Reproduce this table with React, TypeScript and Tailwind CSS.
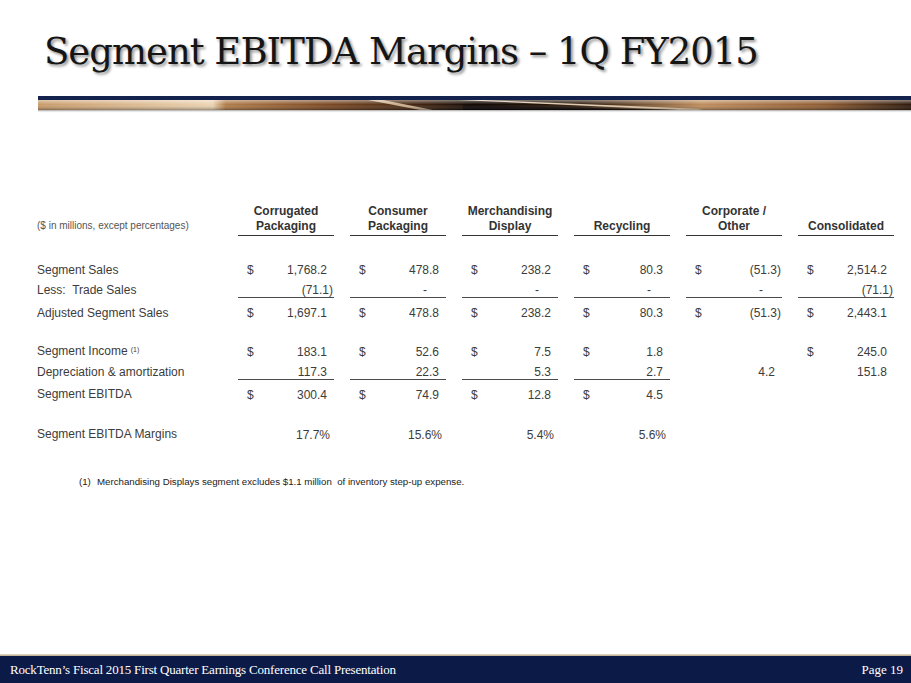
type Kind = "n" | "p" | "d" | "pct";

type Cell = {
  dollar?: boolean;
  value?: string;
  kind?: Kind;
  line?: boolean;
};

type Row = {
  label: string;
  note?: boolean;
  underline?: boolean;
  cells: Cell[];
  gap?: string;
};

const padFor: Record<Kind, string> = {
  n: "pr-[7px]",
  p: "pr-[1px]",
  d: "pr-[19px]",
  pct: "pr-[4px]",
};

const headers: string[][] = [
  ["Corrugated", "Packaging"],
  ["Consumer", "Packaging"],
  ["Merchandising", "Display"],
  ["Recycling"],
  ["Corporate /", "Other"],
  ["Consolidated"],
];

const rows: Row[] = [
  {
    label: "Segment Sales",
    gap: "mt-[23.5px]",
    cells: [
      { dollar: true, value: "1,768.2", kind: "n" },
      { dollar: true, value: "478.8", kind: "n" },
      { dollar: true, value: "238.2", kind: "n" },
      { dollar: true, value: "80.3", kind: "n" },
      { dollar: true, value: "(51.3)", kind: "p" },
      { dollar: true, value: "2,514.2", kind: "n" },
    ],
  },
  {
    label: "Less:  Trade Sales",
    underline: true,
    cells: [
      { value: "(71.1)", kind: "p", line: true },
      { value: "-", kind: "d", line: true },
      { value: "-", kind: "d", line: true },
      { value: "-", kind: "d", line: true },
      { value: "-", kind: "d", line: true },
      { value: "(71.1)", kind: "p", line: true },
    ],
  },
  {
    label: "Adjusted Segment Sales",
    cells: [
      { dollar: true, value: "1,697.1", kind: "n" },
      { dollar: true, value: "478.8", kind: "n" },
      { dollar: true, value: "238.2", kind: "n" },
      { dollar: true, value: "80.3", kind: "n" },
      { dollar: true, value: "(51.3)", kind: "p" },
      { dollar: true, value: "2,443.1", kind: "n" },
    ],
  },
  {
    label: "Segment Income",
    note: true,
    gap: "mt-[17px]",
    cells: [
      { dollar: true, value: "183.1", kind: "n" },
      { dollar: true, value: "52.6", kind: "n" },
      { dollar: true, value: "7.5", kind: "n" },
      { dollar: true, value: "1.8", kind: "n" },
      {},
      { dollar: true, value: "245.0", kind: "n" },
    ],
  },
  {
    label: "Depreciation & amortization",
    underline: true,
    cells: [
      { value: "117.3", kind: "n", line: true },
      { value: "22.3", kind: "n", line: true },
      { value: "5.3", kind: "n", line: true },
      { value: "2.7", kind: "n", line: true },
      { value: "4.2", kind: "n" },
      { value: "151.8", kind: "n" },
    ],
  },
  {
    label: "Segment EBITDA",
    cells: [
      { dollar: true, value: "300.4", kind: "n" },
      { dollar: true, value: "74.9", kind: "n" },
      { dollar: true, value: "12.8", kind: "n" },
      { dollar: true, value: "4.5", kind: "n" },
      {},
      {},
    ],
  },
  {
    label: "Segment EBITDA Margins",
    gap: "mt-[18.5px]",
    cells: [
      { value: "17.7%", kind: "pct" },
      { value: "15.6%", kind: "pct" },
      { value: "5.4%", kind: "pct" },
      { value: "5.6%", kind: "pct" },
      {},
      {},
    ],
  },
];

function Swoosh() {
  return (
    <svg width="873" height="17" viewBox="0 0 873 17" preserveAspectRatio="none" className="block">
      <defs>
        <linearGradient id="band" x1="0" y1="0" x2="1" y2="0">
          <stop offset="0" stopColor="#c99c6b" />
          <stop offset="0.2" stopColor="#ecd4b3" />
          <stop offset="0.215" stopColor="#b27d4b" />
          <stop offset="0.33" stopColor="#7d4b25" />
          <stop offset="0.45" stopColor="#3a2110" />
          <stop offset="0.5" stopColor="#140a04" />
          <stop offset="0.62" stopColor="#2c1a0c" />
          <stop offset="0.76" stopColor="#c08e5e" />
          <stop offset="0.9" stopColor="#8f5d33" />
          <stop offset="1" stopColor="#2e1a0c" />
        </linearGradient>
        <linearGradient id="shade" x1="0" y1="0" x2="0" y2="1">
          <stop offset="0" stopColor="#ffffff" stopOpacity="0.45" />
          <stop offset="0.45" stopColor="#ffffff" stopOpacity="0" />
          <stop offset="1" stopColor="#000000" stopOpacity="0.35" />
        </linearGradient>
        <linearGradient id="drop" x1="0" y1="0" x2="0" y2="1">
          <stop offset="0" stopColor="#8a8a8a" stopOpacity="0.8" />
          <stop offset="1" stopColor="#ffffff" stopOpacity="0" />
        </linearGradient>
      </defs>
      <rect x="0" y="0" width="873" height="4" fill="#14234d" />
      <rect x="0" y="4" width="873" height="10" fill="url(#band)" />
      <polygon points="330,4 345,4 395,14 382,14" fill="#e9cfac" opacity="0.8" />
      <polygon points="420,4 445,4 665,13 660,14 640,14" fill="#f1dcc0" opacity="0.9" />
      <polygon points="425,9 640,14 425,14" fill="#070302" opacity="0.8" />
      <rect x="0" y="4" width="873" height="10" fill="url(#shade)" />
      <rect x="0" y="14" width="873" height="3" fill="url(#drop)" />
    </svg>
  );
}

function ValueCell({ cell, underline }: { cell: Cell; underline?: boolean }) {
  const pad = cell.kind ? padFor[cell.kind] : "";
  if (underline) {
    return (
      <div
        className={`flex h-[17px] items-start justify-between self-start leading-[18px] ${pad} ${
          cell.line ? "border-b border-[#4a4a4a]" : ""
        }`}
      >
        <span className="pl-[9px]">{cell.dollar ? "$" : ""}</span>
        <span>{cell.value}</span>
      </div>
    );
  }
  return (
    <div className={`flex items-center justify-between ${pad}`}>
      <span className="pl-[9px]">{cell.dollar ? "$" : ""}</span>
      <span>{cell.value}</span>
    </div>
  );
}

export default function App() {
  return (
    <div className="flex h-[683px] w-[911px] flex-col overflow-hidden bg-white">
      <div className="pl-[44px] pt-[32px]">
        <h1 className="whitespace-nowrap font-['DejaVu_Serif',serif] text-[37px] leading-[40px] tracking-[-1px] text-[#151515] [text-shadow:2px_2px_3px_rgba(0,0,0,0.45)]">
          Segment EBITDA Margins – 1Q FY2015
        </h1>
      </div>

      <div className="ml-[38px] mt-[24px]">
        <Swoosh />
      </div>

      <div className="mt-[91px] font-['Liberation_Sans',Arial,sans-serif] text-[12px] text-[#3c3c3c]">
        <div className="grid grid-cols-[185px_repeat(6,96px)] items-end gap-x-4 pl-[37px]">
          <div className="pb-[4px] text-[10px] leading-[12px] text-[#555]">($ in millions, except percentages)</div>
          {headers.map((h) => (
            <div
              key={h.join(" ")}
              className="border-b border-[#333] pb-[1px] text-center font-bold leading-[15px] text-[#333]"
            >
              {h.map((line) => (
                <div key={line}>{line}</div>
              ))}
            </div>
          ))}
        </div>

        {rows.map((row) => (
          <div
            key={row.label}
            className={`grid h-[21.5px] grid-cols-[185px_repeat(6,96px)] gap-x-4 pl-[37px] ${row.gap ?? ""}`}
          >
            <div
              className={`whitespace-pre ${row.underline ? "h-[17px] leading-[18px]" : "leading-[21.5px]"}`}
            >
              {row.label}
              {row.note ? <sup className="ml-[3px] text-[7px]">(1)</sup> : null}
            </div>
            {row.cells.map((cell, i) => (
              <ValueCell key={i} cell={cell} underline={row.underline} />
            ))}
          </div>
        ))}

        <div className="mt-[30px] flex whitespace-pre pl-[79px] text-[9.7px] leading-[12px] text-[#222]">
          <span className="w-[18px]">(1)</span>
          <span>Merchandising Displays segment excludes $1.1 million  of inventory step-up expense.</span>
        </div>
      </div>

      <div className="flex-1" />

      <div className="h-[2px] bg-gradient-to-b from-[#e9dcc6] to-[#b9a98e]" />
      <div className="flex h-[27px] items-center justify-between bg-[#0c1a47] pl-[10px] pr-[8px] font-['Liberation_Serif',serif] text-[13px] text-white">
        <span className="tracking-[-0.2px]">RockTenn’s Fiscal 2015 First Quarter Earnings Conference Call Presentation</span>
        <span>Page 19</span>
      </div>
    </div>
  );
}
